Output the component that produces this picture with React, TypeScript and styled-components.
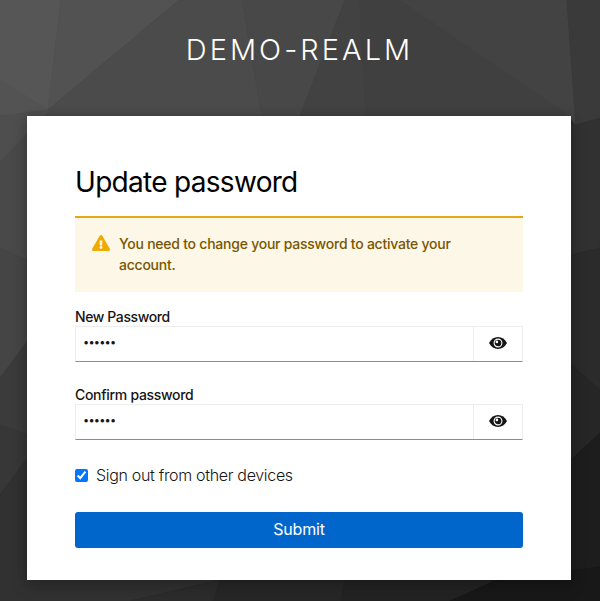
import React, { useState } from "react";
import styled, { createGlobalStyle } from "styled-components";
import { FaExclamationTriangle } from "react-icons/fa";

const GlobalStyle = createGlobalStyle`
  *, *::before, *::after { box-sizing: border-box; }
  body { margin: 0; background: #2e2e2e; font-family: Inter, "Open Sans", sans-serif; }
`;

const Page = styled.div`
  position: relative;
  min-height: 601px;
  display: flex;
  flex-direction: column;
  overflow: hidden;
  isolation: isolate;
`;

const Backdrop = styled.svg`
  position: absolute;
  inset: 0;
  z-index: -1;
  width: 100%;
  height: 100%;

  polygon { stroke-width: 1; }
`;

const RealmName = styled.header`
  height: 116px;
  padding: 28px 1px 0 0;
  text-align: center;
  color: #fff;
  font: 350 29px/43px Inter, sans-serif;
  letter-spacing: 3.05px;
  text-transform: uppercase;
`;

const Card = styled.main`
  width: 544px;
  height: 464px;
  margin-left: 27px;
  padding: 48px 48px 32px;
  background: #fff;
  box-shadow: 0 8px 16px rgba(3, 3, 3, 0.16), 0 0 10px rgba(3, 3, 3, 0.16);
`;

const Title = styled.h1`
  margin: 0;
  height: 52px;
  color: #000;
  font: 400 28px/36px Inter, sans-serif;
  letter-spacing: -0.7px;
  white-space: nowrap;
`;

const Alert = styled.div`
  display: flex;
  gap: 9px;
  height: 76px;
  padding: 15px 17px;
  border-top: 2px solid #e6a817;
  background: #fdf7e7;
  color: #795600;
`;

const AlertIcon = styled(FaExclamationTriangle)`
  flex: none;
  width: 18px;
  height: 16px;
  margin-top: 2px;
  color: #f0ab00;
`;

const AlertText = styled.p`
  margin: 0;
  font-size: 14px;
  font-weight: 550;
  line-height: 21px;
  letter-spacing: -0.24px;
`;

const Form = styled.form`
  padding-top: 14px;
`;

const Field = styled.div`
  height: 78px;
`;

const Label = styled.label<{ $tracking: number }>`
  display: block;
  height: 20px;
  color: #151515;
  font-size: 14px;
  font-weight: 500;
  line-height: 21px;
  letter-spacing: ${(p) => p.$tracking}px;
`;

const InputGroup = styled.div`
  display: flex;
  height: 36px;
  border: 1px solid #ededed;
  border-bottom-color: #8a8d90;
`;

const PasswordInput = styled.input`
  flex: 1;
  min-width: 0;
  padding: 0 7px 4px;
  border: 0;
  outline: 0;
  background: #fff;
  color: #151515;
  font: 11px Inter, sans-serif;
  letter-spacing: -0.8px;
`;

const RevealButton = styled.button`
  display: grid;
  place-items: center;
  width: 49px;
  padding: 0 0 2px;
  border: 0;
  border-left: 1px solid #ededed;
  background: #fff;
  color: #151515;
`;

const EyeDrawing = styled.svg`
  display: block;
  width: 18px;
  height: 12px;
`;

const CheckRow = styled.label`
  display: flex;
  align-items: center;
  gap: 8px;
  height: 24px;
  margin-top: 1px;
  color: #151515;
  font: 300 16px/24px Inter, sans-serif;
  letter-spacing: -0.32px;
  white-space: nowrap;
`;

const Checkbox = styled.input`
  width: 13px;
  height: 13px;
  margin: 0;
`;

const Submit = styled.button`
  display: block;
  width: 100%;
  height: 36px;
  margin-top: 25px;
  padding: 0 0 1px;
  border: 0;
  border-radius: 3px;
  background: #06c;
  color: #fff;
  font: 400 16px/35px Inter, sans-serif;
  letter-spacing: -0.2px;
`;

const facets: [string, string][] = [
  ["#565656", "0,0 61,0 48,110 0,80"],
  ["#535353", "0,80 48,110 0,116"],
  ["#525252", "61,0 179,0 48,110"],
  ["#4b4b4b", "179,0 242,0 262,116 48,116 48,110"],
  ["#484848", "242,0 345,0 300,116 262,116"],
  ["#424242", "345,0 360,0 366,116 300,116"],
  ["#404040", "360,0 400,0 570,116 366,116"],
  ["#434343", "400,0 567,0 576,126 570,116"],
  ["#3a3a3a", "567,0 600,0 600,118 576,126"],
  ["#4e4e4e", "0,116 48,110 48,113 0,162"],
  ["#494949", "0,162 48,113 48,270 0,248"],
  ["#454545", "0,248 48,270 48,314 0,378"],
  ["#3b3b3b", "0,378 48,314 48,442 0,425"],
  ["#373737", "0,425 48,442 48,430 0,495"],
  ["#313131", "0,495 48,430 220,580 130,601 0,601"],
  ["#2c2c2c", "130,601 220,580 213,601"],
  ["#272727", "220,580 345,580 341,601 213,601"],
  ["#232323", "345,580 497,580 450,601 341,601"],
  ["#313131", "560,130 600,118 600,248 560,258"],
  ["#2b2b2b", "560,258 600,248 600,390 560,355"],
  ["#262626", "560,355 600,390 600,433 560,470"],
  ["#1d1d1d", "560,470 600,433 600,567 497,590 490,580"],
  ["#181818", "497,580 600,567 600,601 450,601"],
];

const EyeIcon = () => (
  <EyeDrawing viewBox="0 0 18 12" aria-hidden="true">
    <path d="M0 6C2 2.3 5.2 0 9 0s7 2.3 9 6c-2 3.7-5.2 6-9 6S2 9.7 0 6Z" fill="currentColor" />
    <circle cx="9" cy="6" r="3.9" fill="none" stroke="#fff" strokeWidth="1.1" />
    <circle cx="7.9" cy="4.9" r="1.3" fill="#fff" />
  </EyeDrawing>
);

function PasswordField({ id, label, tracking }: { id: string; label: string; tracking: number }) {
  const [value, setValue] = useState("secret");
  const [shown, setShown] = useState(false);
  return (
    <Field>
      <Label htmlFor={id} $tracking={tracking}>{label}</Label>
      <InputGroup>
        <PasswordInput
          id={id}
          type={shown ? "text" : "password"}
          value={value}
          onChange={(e) => setValue(e.target.value)}
        />
        <RevealButton type="button" onClick={() => setShown(!shown)}>
          <EyeIcon />
        </RevealButton>
      </InputGroup>
    </Field>
  );
}

export default function App() {
  return (
    <>
      <GlobalStyle />
      <Page>
        <Backdrop viewBox="0 0 600 601" preserveAspectRatio="none" aria-hidden="true">
          {facets.map(([fill, points]) => (
            <polygon key={points} fill={fill} stroke={fill} points={points} />
          ))}
        </Backdrop>
        <RealmName>demo-realm</RealmName>
        <Card>
          <Title>Update password</Title>
          <Alert>
            <AlertIcon />
            <AlertText>You need to change your password to activate your account.</AlertText>
          </Alert>
          <Form onSubmit={(e) => e.preventDefault()}>
            <PasswordField id="new" label="New Password" tracking={-0.4} />
            <PasswordField id="confirm" label="Confirm password" tracking={-0.3} />
            <CheckRow>
              <Checkbox type="checkbox" defaultChecked />
              Sign out from other devices
            </CheckRow>
            <Submit type="submit">Submit</Submit>
          </Form>
        </Card>
      </Page>
    </>
  );
}
